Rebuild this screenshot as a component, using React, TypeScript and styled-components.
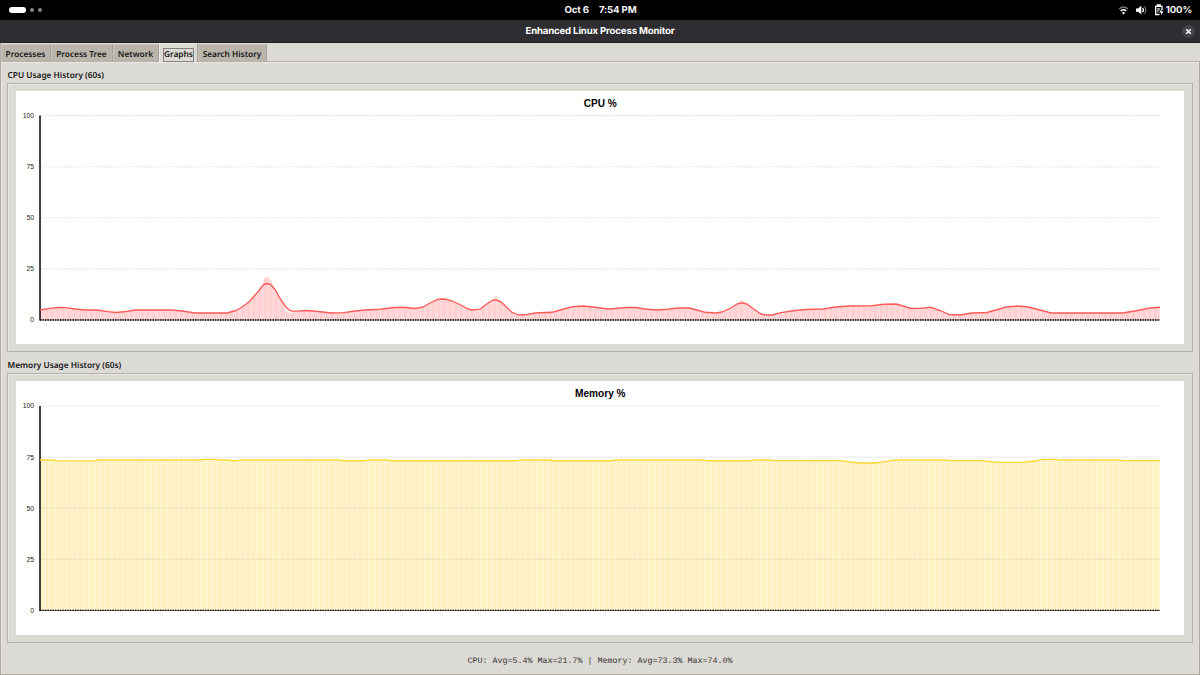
import React from "react";
import styled, { createGlobalStyle } from "styled-components";

const Global = createGlobalStyle`
  *{box-sizing:border-box}
  body{margin:0;background:#dcdad5;overflow:hidden}
`;

const Screen = styled.div`
  width: 1200px;
  height: 675px;
  display: flex;
  flex-direction: column;
  background: #dcdad5;
  font-family: "Noto Sans", sans-serif;
  text-rendering: geometricPrecision;
  color: #161616;
`;

const TopBar = styled.header`
  height: 20px;
  flex: none;
  display: grid;
  grid-template-columns: 1fr auto 1fr;
  align-items: center;
  padding: 0 8px 0 9px;
  background: #000;
  color: #f4f4f4;
  font: 650 9.6px/20px Inter, sans-serif;
  letter-spacing: -0.14px;
`;

const Workspaces = styled.div`
  display: flex;
  align-items: center;
  gap: 4px;
`;

const Dot = styled.span<{ $active?: boolean }>`
  width: ${(p) => (p.$active ? 16.5 : 4)}px;
  height: ${(p) => (p.$active ? 6 : 4)}px;
  border-radius: 3px;
  background: ${(p) => (p.$active ? "#fff" : "#858585")};
`;

const Clock = styled.div`
  display: flex;
  gap: 10px;
  padding-top: 1px;
  line-height: 19px;
`;

const Tray = styled.div`
  display: flex;
  justify-content: flex-end;
  align-items: center;
`;

const Charge = styled.span`
  padding-top: 1px;
  line-height: 19px;
`;

const TrayIcon = styled.svg<{ $gap: number }>`
  width: 11px;
  height: 12px;
  flex: none;
  margin-right: ${(p) => p.$gap}px;
`;

const TitleBar = styled.div`
  height: 23px;
  flex: none;
  display: grid;
  grid-template-columns: 1fr auto 1fr;
  align-items: center;
  padding-right: 5px;
  background: #2e2d32;
  border-bottom: 1px solid #222126;
  color: #fff;
  font: 650 9.6px/22px Inter, sans-serif;
  letter-spacing: -0.15px;
`;

const Close = styled.button`
  grid-column: 3;
  justify-self: end;
  width: 13px;
  height: 13px;
  padding: 0;
  border: 0;
  border-radius: 50%;
  background: #454449;
  display: grid;
  place-items: center;
`;

const Title = styled.span`
  grid-column: 2;
  margin-left: 5px;
  padding-top: 1px;
  line-height: 21px;
`;

const Tabs = styled.nav`
  height: 18px;
  flex: none;
  display: flex;
  align-items: flex-end;
  border-left: 1px solid #b3b0aa;
`;

const Tab = styled.div<{ $w: number; $active?: boolean }>`
  width: ${(p) => p.$w}px;
  height: ${(p) => (p.$active ? 19 : 17)}px;
  margin-bottom: ${(p) => (p.$active ? -1 : 0)}px;
  padding: 3px ${(p) => (p.$active ? 0 : 1)}px 0 0;
  position: relative;
  flex: none;
  display: flex;
  align-items: center;
  justify-content: center;
  background: ${(p) => (p.$active ? "#dcdad5" : "#bab5ab")};
  border-right: 1px solid #a5a19a;
  border-top: 1px solid ${(p) => (p.$active ? "#eeebe7" : "#c8c4bb")};
  border-left: 1px solid ${(p) => (p.$active ? "#eeebe7" : "#c8c4bb")};
  font-size: 8.3px;
  font-weight: 560;
  line-height: 12px;
  white-space: nowrap;
`;

const Focus = styled.span<{ $on?: boolean }>`
  padding: 0 0.5px;
  outline: ${(p) => (p.$on ? "1px solid #85837f" : "none")};
  outline-offset: 0;
`;

const Pane = styled.main`
  flex: 1;
  display: flex;
  flex-direction: column;
  border: 1px solid #aeaba4;
  border-top-color: #b5b2ac;
  box-shadow: inset 1px 1px #eae7e3;
  padding: 7px 6px 0;
`;

const Group = styled.section<{ $gap: number }>`
  margin-bottom: ${(p) => p.$gap}px;
`;

const GroupLabel = styled.div`
  height: 14px;
  font-size: 8.3px;
  font-weight: 560;
  line-height: 14px;
  padding-left: 0.5px;
`;

const Frame = styled.div<{ $h: number }>`
  height: ${(p) => p.$h}px;
  border: 1px solid #b3b1ab;
  box-shadow: inset 1px 1px #e9e7e3;
  padding: 7px 7px 7px 8px;
`;

const Plot = styled.svg<{ $h: number }>`
  display: block;
  width: 1168px;
  height: ${(p) => p.$h}px;
  background: #fff;
  text-rendering: auto;
`;

const Status = styled.footer`
  text-align: center;
  font: 8.34px/12px "Liberation Mono", monospace;
  color: #333;
  white-space: pre;
`;

type P = [number, number];

const cpuLine: P[] = [
  [40,310],[50,308.4],[58,307.5],[66,307.7],[75,309],[85,310],[97,310],[108,311.7],[116,312.5],[124,311.8],[135,310],[172,310],[182,311],[195,313],[227,313],[236,310.5],[243,306.5],[250,301],[257,293],[262,286.5],[264,284.5],[267,283.5],[270,284.5],[272,286],[276,291],[281,300],[286,307],[289,310],[292,311.2],[298,311.2],[306,310.5],[313,311],[332,313],[344,312.6],[355,311],[365,310],[380,309.3],[395,307.5],[403,307.3],[415,308.5],[423,307],[432,302],[437,299.7],[441,299],[446,299.3],[452,301],[461,305],[467,308.5],[472,310],[480,309.2],[486,304.5],[492,300.5],[496,299.8],[501,302],[507,307.5],[512,312.5],[518,315],[525,314.8],[535,313],[552,312.3],[562,309.5],[572,306.8],[583,306],[595,307.3],[608,309],[618,308.3],[627,307.5],[636,307.5],[645,309],[656,310],[668,309.3],[678,308],[689,308],[697,310],[705,312.3],[716,313],[722,312],[731,308],[737,304],[742,302.8],[747,304],[753,308.5],[760,313.5],[765,315],[772,315],[781,312.6],[795,310.5],[806,309.5],[823,309],[836,307],[850,306],[872,305.8],[884,304.3],[896,304],[903,306],[911,308.5],[920,308.4],[931,307.3],[940,310.5],[949,314.5],[960,315],[972,313],[987,312.5],[996,310],[1005,307.3],[1018,306],[1028,307],[1040,310],[1051,313],[1123,313],[1135,311],[1150,308],[1160,307.3],
];

const peaks: Record<number, number> = { 264: 279, 267: 276, 270: 279, 272: 283, 286: 310.5, 289: 313, 292: 312.5, 441: 298.3, 496: 295.5, 742: 299.8, 512: 313.5, 518: 316, 765: 316, 480: 310.5 };
const cpuFill: P[] = cpuLine.map(([x, y]) => [x, peaks[x] ?? y]);

const memLine: P[] = [
  [40,460],[53,460],[56,460.8],[95,460.8],[98,460],[202,460],[205,459.4],[216,459.4],[219,460],[229,460],[231,460.7],[237,460.7],[240,460],[339,460],[342,460.7],[365,460.7],[368,460],[388,460],[391,460.7],[517,460.7],[520,460],[549,460],[552,460.7],[612,460.7],[615,460],[704,460],[707,460.7],[750,460.7],[753,460],[770,460],[773,460.6],[840,460.6],[850,462],[860,463],[875,463],[885,461.7],[895,460],[946,460],[949,460.6],[983,460.6],[993,462],[1000,462.3],[1022,462.3],[1035,461],[1043,459.4],[1056,459.4],[1060,460],[1120,460],[1123,460.6],[1160,460.6],
];

const toPoints = (pts: P[]) => pts.map((p) => p.join(",")).join(" ");

interface ChartProps {
  id: string;
  title: string;
  top: number;
  height: number;
  base: number;
  line: P[];
  fill: P[];
  stroke: string;
  light: string;
  dark: string;
}

function Chart({ id, title, top, height, base, line, fill, stroke, light, dark }: ChartProps) {
  const area = fill.concat([[1160, base], [40, base]]);
  return (
    <Plot $h={height} viewBox={`16 ${top} 1168 ${height}`}>
      <defs>
        <pattern id={id} width="5.6" height="8" patternUnits="userSpaceOnUse" x="40">
          <rect width="5.6" height="8" fill={light} />
          <rect width="2.4" height="8" fill={dark} />
        </pattern>
      </defs>
      <text x="600.3" y={top + 15.8} textAnchor="middle" fontFamily="Liberation Sans" fontWeight="700" fontSize="10.1" fill="#000">{title}</text>
      <polygon points={toPoints(area)} fill={`url(#${id})`} />
      {[100, 75, 50, 25, 0].map((v, i) => {
        const y = base - 204.4 + i * 51.1;
        return (
          <g key={v}>
            {v > 0 && <line x1="41" x2="1160" y1={y} y2={y} stroke="#8a8a8a" strokeOpacity=".3" strokeWidth="1.1" strokeDasharray="1.25 1.25" />}
            <text x="34" y={y + 2.4} textAnchor="end" fontFamily="Liberation Sans" fontSize="6.8" fill="#222">{v}</text>
          </g>
        );
      })}
      <line x1="40" x2="40" y1={base - 204.4} y2={base + 0.5} stroke="#222" strokeWidth="1.7" />
      <line x1="40" x2="1160" y1={base} y2={base} stroke="#555" strokeWidth="1" strokeOpacity=".8" />
      <line x1="40" x2="1160" y1={base} y2={base} stroke="#000" strokeWidth="1.3" strokeDasharray="1.25 1.25" />
      <polyline points={toPoints(line)} fill="none" stroke={stroke} strokeWidth="1.35" strokeLinejoin="round" />
    </Plot>
  );
}

export default function App() {
  return (
    <Screen>
      <Global />
      <TopBar>
        <Workspaces><Dot $active /><Dot /><Dot /></Workspaces>
        <Clock><span>Oct 6</span><span>7:54 PM</span></Clock>
        <Tray>
          <TrayIcon $gap={7} viewBox="0 0 11 12" fill="none" stroke="#fff">
            <path d="M1 5Q5.5 1 10 5" stroke="#777" strokeWidth="1.3" />
            <path d="M2.7 7Q5.5 4.5 8.3 7" strokeWidth="1.5" />
            <circle cx="5.5" cy="9" r="1.2" fill="#fff" stroke="none" />
          </TrayIcon>
          <TrayIcon $gap={7} viewBox="0 0 11 12" fill="none">
            <path d="M0 4.4h2L5.3 1.8v8.4L2 7.8H0z" fill="#fff" />
            <path d="M6.5 3.8Q8.5 6 6.5 8.2" stroke="#fff" strokeWidth="1.2" />
            <path d="M8.5 2.3Q11.2 6 8.5 9.7" stroke="#777" strokeWidth="1.1" />
          </TrayIcon>
          <TrayIcon $gap={1} viewBox="0 0 11 12" fill="none">
            <path d="M3.3 2V1h3v1M8 6V2.4H1.7v8.1H5.5" stroke="#fff" strokeWidth="1.3" />
            <path d="M3.2 4h3.4L4 8.8H3.2z" fill="#999" />
            <path d="M7.4 5L5.2 8.6h1.9v2.4L9.6 7.6H7.6z" fill="#fff" />
          </TrayIcon>
          <Charge>100%</Charge>
        </Tray>
      </TopBar>
      <TitleBar>
        <Title>Enhanced Linux Process Monitor</Title>
        <Close aria-label="Close">
          <svg width="7" height="7" viewBox="0 0 7 7"><path d="M1.2 1.2l4.6 4.6M5.8 1.2L1.2 5.8" stroke="#fff" strokeWidth="1.5" /></svg>
        </Close>
      </TitleBar>
      <Tabs>
        <Tab $w={50}><Focus>Processes</Focus></Tab>
        <Tab $w={62}><Focus>Process Tree</Focus></Tab>
        <Tab $w={46}><Focus>Network</Focus></Tab>
        <Tab $w={39} $active><Focus $on>Graphs</Focus></Tab>
        <Tab $w={69}><Focus>Search History</Focus></Tab>
      </Tabs>
      <Pane>
        <Group $gap={7}>
          <GroupLabel>CPU Usage History (60s)</GroupLabel>
          <Frame $h={269}>
            <Chart id="cpu" title="CPU %" top={91} height={253.4} base={320} line={cpuLine} fill={cpuFill} stroke="#ff5a5a" light="#ffd9d9" dark="#ffcfcf" />
          </Frame>
        </Group>
        <Group $gap={12}>
          <GroupLabel>Memory Usage History (60s)</GroupLabel>
          <Frame $h={270}>
            <Chart id="memory" title="Memory %" top={381} height={254} base={610.4} line={memLine} fill={memLine} stroke="#fdd835" light="#fff4ce" dark="#fff0c0" />
          </Frame>
        </Group>
        <Status>CPU: Avg=5.4% Max=21.7% | Memory: Avg=73.3% Max=74.0%</Status>
      </Pane>
    </Screen>
  );
}
